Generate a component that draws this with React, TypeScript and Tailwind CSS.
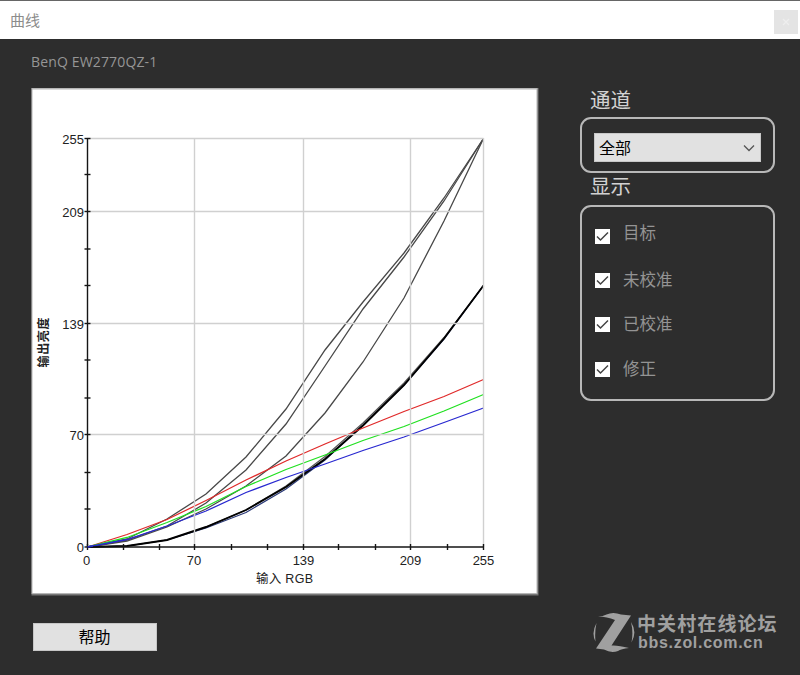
import { useState } from "react";

type Curve = {
  color: string;
  width: number;
  points: string;
};

const xTicks = [87.5, 123.5, 159.5, 194.5, 231.5, 267.5, 303.5, 338.5, 375.5, 410.5, 447.5, 483.5];
const yTicks = [138.5, 174.5, 211.5, 249, 285.5, 323.5, 360, 398, 434.5, 472.5, 509, 547];

const xLabels = [
  { x: 86.5, text: "0" },
  { x: 194, text: "70" },
  { x: 303.5, text: "139" },
  { x: 410.5, text: "209" },
  { x: 483.5, text: "255" },
];

const yLabels = [
  { y: 143.5, text: "255" },
  { y: 216.5, text: "209" },
  { y: 328.5, text: "139" },
  { y: 440, text: "70" },
  { y: 552, text: "0" },
];

const curves: Curve[] = [
  // uncalibrated
  {
    color: "#484848",
    width: 1.3,
    points: "87.5,547 127,539 167,519 206,494 246,457 286,409 325,350 363,302 404,253 444,198 483.5,138.5",
  },
  {
    color: "#484848",
    width: 1.3,
    points: "87.5,547 127,540 167,526 206,503 246,470 286,424 325,366 363,309 404,257 444,201 483.5,138.5",
  },
  {
    color: "#484848",
    width: 1.3,
    points: "87.5,547 127,541 167,527 206,509 246,486 286,456 325,413 363,362 404,298 444,221 483.5,138.5",
  },
  // target and calibrated
  {
    color: "#2b3a78",
    width: 1.2,
    points: "87.5,547 127,546 167,540 206,528 246,512.5 286,489 325,460 363,425 404,385 444,339 483.5,285.5",
  },
  {
    color: "#555555",
    width: 1.2,
    points: "87.5,547 127,546 167,540 206,527 246,510 286,486 325,456.5 363,423 404,383 444,337.5 483.5,285.5",
  },
  {
    color: "#000000",
    width: 1.9,
    points: "87.5,547 127,546 167,540 206,527 246,510 286,487 325,459 363,425.5 404,385 444,338.5 483.5,285.5",
  },
  // correction
  {
    color: "#e02a2a",
    width: 1.3,
    points: "87.5,547 127,534.5 167,519.5 206,500.5 246,480 286,461 325,444 363,428 404,411.5 444,396.5 483.5,379.5",
  },
  {
    color: "#20e020",
    width: 1.3,
    points: "87.5,547 127,537.5 167,522.5 206,506.5 246,486.5 286,469.5 325,455 363,440.5 404,426.5 444,411 483.5,394.5",
  },
  {
    color: "#2828d0",
    width: 1.3,
    points: "87.5,547 127,539.5 167,526 206,511 246,492.5 286,477.5 325,464 363,450.5 404,437 444,422.5 483.5,408",
  },
];

const initialOptions = [
  { label: "目标", checked: true, offset: "-mt-[4px]" },
  { label: "未校准", checked: true, offset: "-mt-[1px]" },
  { label: "已校准", checked: true, offset: "-mt-[1px]" },
  { label: "修正", checked: true, offset: "-mt-[1px]" },
];

function CurveChart() {
  return (
    <svg
      width="508"
      height="508"
      viewBox="31 88 508 508"
      className="block font-['Liberation_Sans','Noto_Sans_CJK_SC',sans-serif]"
    >
      <rect x="31.5" y="88" width="507" height="507.5" fill="#777777" />
      <rect x="31.5" y="88" width="506" height="506" fill="#b5b5b5" />
      <rect x="32.5" y="89.5" width="504" height="503.5" fill="#ffffff" />

      {curves.map((c, i) => (
        <polyline key={i} points={c.points} fill="none" stroke={c.color} strokeWidth={c.width} />
      ))}

      {/* grid sits over the curves */}
      <g stroke="#d0d0d0" strokeWidth="1.4">
        {[194.5, 303.5, 410.5, 483.5].map((x) => (
          <line key={x} x1={x} x2={x} y1={138} y2={547} />
        ))}
        {[138.5, 211.5, 323.5, 434.5].map((y) => (
          <line key={y} x1={87} x2={483.5} y1={y} y2={y} />
        ))}
      </g>

      {/* axes */}
      <g stroke="#151515" strokeWidth="1.4">
        <line x1={87.5} x2={87.5} y1={138} y2={547} />
        <line x1={87.5} x2={484} y1={547} y2={547} />
        {xTicks.map((x) => (
          <line key={x} x1={x} x2={x} y1={544} y2={550} />
        ))}
        {yTicks.map((y) => (
          <line key={y} x1={84.5} x2={90.5} y1={y} y2={y} />
        ))}
      </g>
      <line x1={87.5} x2={93} y1={547} y2={546} stroke="#2828d0" strokeWidth="1.5" />

      <g fill="#222222" fontSize="13">
        {xLabels.map((l) => (
          <text key={l.text} x={l.x} y={565} textAnchor="middle">
            {l.text}
          </text>
        ))}
        {yLabels.map((l) => (
          <text key={l.text} x={84} y={l.y} textAnchor="end">
            {l.text}
          </text>
        ))}
        <text x={256} y={583} fontSize="12.5" textLength="57">
          输入 RGB
        </text>
        <text
          transform="translate(48 367.5) rotate(-90)"
          fontSize="12"
          fontWeight="bold"
          textLength="50"
        >
          输出亮度
        </text>
      </g>
    </svg>
  );
}

function Watermark() {
  return (
    <div className="flex text-[#a0a0a0]">
      <svg width="42" height="42" viewBox="0 0 42 42" fill="currentColor">
        <path d="M5 4.5 Q10 4.5 13.5 2.5 Q20 -.5 28 2.5 L38 3.5 L18.5 33.5 Q25 33 36 36 Q28 37 25 39 Q18 41.5 11 37.5 L3 36.5 L22 8 Q14 4.5 5 4.5Z" />
        <path d="M3.5 11 Q-2 21 2.5 29.5 Q1.5 20 3.5 11Z" />
        <path d="M38 10 Q44.5 20 38.5 30.5 Q40.5 20 38 10Z" />
      </svg>
      <div className="ml-[2px] w-[142px] whitespace-nowrap">
        <div className="h-[21px] font-['Noto_Sans_CJK_SC',sans-serif] text-[19px] leading-[21px] font-bold tracking-[1.1px]">
          中关村在线论坛
        </div>
        <div className="ml-px h-[20px] font-['Liberation_Sans',sans-serif] text-[16px] leading-[20px] font-bold tracking-[0.7px]">
          bbs.zol.com.cn
        </div>
      </div>
    </div>
  );
}

export default function App() {
  const [options, setOptions] = useState(initialOptions);

  const toggle = (index: number) => {
    setOptions(options.map((o, i) => (i === index ? { ...o, checked: !o.checked } : o)));
  };

  return (
    <main className="flex h-[675px] w-[800px] flex-col overflow-hidden bg-[#2d2d2d] font-['Noto_Sans','Noto_Sans_CJK_SC',sans-serif]">
      {/* Title bar */}
      <header className="flex h-[39px] shrink-0 justify-between border-t border-[#666] bg-white pl-[10px]">
        <h1 className="pt-[7px] text-[15px] leading-[24px] text-[#8c8c8c]">曲线</h1>
        <button className="mt-[9px] mr-[2px] flex h-6 w-6 items-center justify-center bg-[#e4e4e4] text-[#eeeeee]">
          <svg width="8" height="8" viewBox="0 0 8 8" stroke="currentColor" strokeWidth="1.2">
            <path d="M1 1 7 7M7 1 1 7" />
          </svg>
        </button>
      </header>

      <div className="flex">
        <section className="w-[542px] pl-[31px]">
          <p className="h-[49px] pt-[11px] font-['Open_Sans',sans-serif] text-[14px] leading-[23px] tracking-[0.15px] text-[#969696]">
            BenQ EW2770QZ-1
          </p>
          <CurveChart />
          <button className="mt-[27px] ml-[1.5px] flex h-[28px] w-[124px] items-center justify-center border border-[#c6c6c6] bg-[#e1e1e1] text-[16px] leading-[26px] text-black">
            帮助
          </button>
        </section>

        <aside className="flex w-[258px] flex-col pl-[38px]">
          <h2 className="mt-[46px] ml-[10px] h-[32px] text-[20.5px] leading-[30px] text-[#d2d2d2]">通道</h2>
          <div className="h-[56px] w-[195px] rounded-[11px] border-2 border-[#b8b8b8] px-[12px] pt-[14px]">
            <button className="flex h-[29px] w-[167px] items-center justify-between border border-[#c8c8c8] bg-[#e1e1e1] pr-[5px] pl-[4px] text-[16px] text-black">
              全部
              <svg width="12" height="8" viewBox="0 0 12 8" fill="none" stroke="#555" strokeWidth="1.3">
                <path d="M1 1.5 6 6.5 11 1.5" />
              </svg>
            </button>
          </div>
          <h2 className="ml-[10px] h-[32px] text-[20.5px] leading-[26px] text-[#d2d2d2]">显示</h2>
          <div className="h-[196px] w-[195px] rounded-[11px] border-2 border-[#b8b8b8] pt-[22px] pl-[13px]">
            {options.map((o, i) => (
              <button key={o.label} onClick={() => toggle(i)} className="flex h-[44.2px] items-start">
                <span className="flex h-[15px] w-[15px] shrink-0 items-center justify-center bg-white">
                  {o.checked && (
                    <svg width="13" height="11" viewBox="0 0 13 11" fill="none" stroke="#444" strokeWidth="1.5">
                      <path d="M1 5.5 4.5 9 12 1.5" />
                    </svg>
                  )}
                </span>
                <span className={`ml-[13px] text-[16.5px] leading-[16px] text-[#949494] ${o.offset}`}>
                  {o.label}
                </span>
              </button>
            ))}
          </div>
          <div className="mt-[211px] ml-[13px]">
            <Watermark />
          </div>
        </aside>
      </div>
    </main>
  );
}
